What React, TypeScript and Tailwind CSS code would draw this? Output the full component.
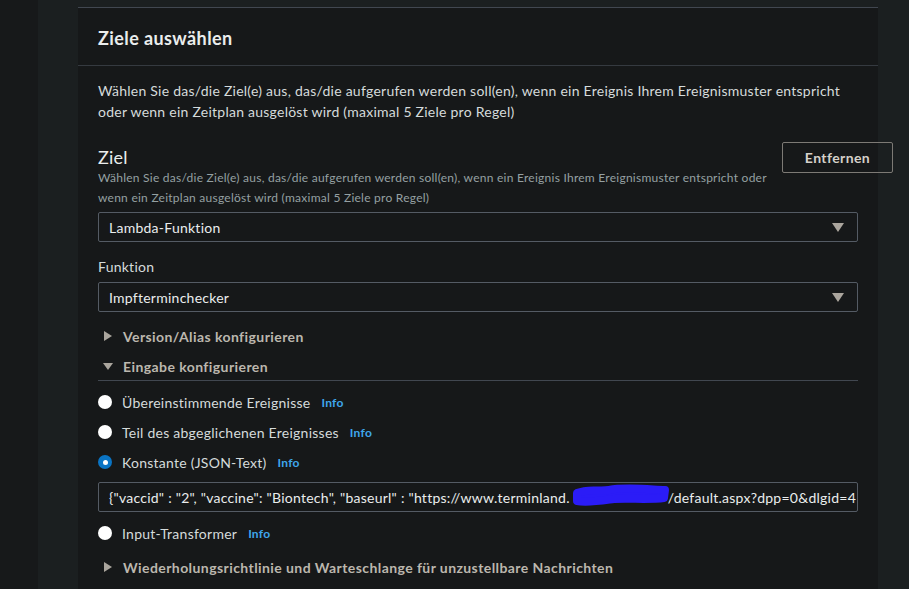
import React from "react";

const Caret = ({ open }: { open?: boolean }) => (
  <svg width="10" height="10" viewBox="0 0 10 10" className="shrink-0">
    {open ? (
      <polygon points="0,2 10,2 5,9" fill="#aaa59d" />
    ) : (
      <polygon points="1,0 9,5 1,10" fill="#aaa59d" />
    )}
  </svg>
);

const SelectBox = ({ value }: { value: string }) => (
  <div className="flex h-[30px] items-center justify-between rounded-[2px] border border-[#545b64] px-[10px] text-[14px] text-[#eaeded]">
    <span>{value}</span>
    <svg width="12" height="9" viewBox="0 0 12 9" className="mr-[3px]">
      <polygon points="0,0 12,0 6,9" fill="#aaa59d" />
    </svg>
  </div>
);

const Radio = ({ label, checked }: { label: string; checked?: boolean }) => (
  <div className="flex h-[20px] items-center">
    {checked ? (
      <span className="flex h-[14px] w-[14px] items-center justify-center rounded-full bg-[#0a74c4]">
        <span className="h-[5px] w-[5px] rounded-full bg-white" />
      </span>
    ) : (
      <span className="h-[14px] w-[14px] rounded-full bg-white" />
    )}
    <span className="ml-[10px] text-[14px] text-[#d5dbdb]">{label}</span>
    <span className="ml-[11px] mt-[2px] text-[12px] font-bold text-[#3fa7ec]">Info</span>
  </div>
);

const Expander = ({ label, open }: { label: string; open?: boolean }) => (
  <div className="flex h-[20px] items-center pl-[5px]">
    <Caret open={open} />
    <span className="ml-[10px] text-[14px] font-bold tracking-[0.42px] text-[#bcb7ae]">{label}</span>
  </div>
);

export default function App() {
  return (
    <div
      className="flex h-[589px] overflow-hidden bg-[#1b1f20] tracking-[0.25px]"
      style={{ fontFamily: 'Lato, "Noto Sans", sans-serif' }}
    >
      <div className="w-[38px] shrink-0 bg-[#17191a]" />
      <div className="w-[40px] shrink-0" />
      <div className="w-[800px] shrink-0 pt-[7px]">
        <div className="h-full border-t border-[#414750] bg-[#161819]">
          {/* Header */}
          <div className="flex h-[58px] items-center border-b border-[#353a40] px-5 pt-[3px]">
            <h2 className="text-[18px] font-bold tracking-[0.4px] text-[#eaeded]">Ziele auswählen</h2>
          </div>

          <div className="px-5 pt-[14px]">
            <p className="text-[14px] leading-[21px] text-[#d5dbdb]">
              Wählen Sie das/die Ziel(e) aus, das/die aufgerufen werden soll(en), wenn ein Ereignis Ihrem
              Ereignismuster entspricht oder wenn ein Zeitplan ausgelöst wird (maximal 5 Ziele pro Regel)
            </p>

            {/* Ziel */}
            <div className="mt-[20px] flex items-start justify-between">
              <div className="pt-[4px]">
                <div className="text-[18px] leading-[22px] text-[#eaeded]">Ziel</div>
                <div className="w-[680px] text-[12px] leading-[20px] text-[#95a0a2]">
                  Wählen Sie das/die Ziel(e) aus, das/die aufgerufen werden soll(en), wenn ein Ereignis Ihrem
                  Ereignismuster entspricht oder wenn ein Zeitplan ausgelöst wird (maximal 5 Ziele pro Regel)
                </div>
              </div>
              <button className="mr-[-35px] h-[31px] w-[111px] shrink-0 rounded-[2px] border border-[#7d7a75] text-[14px] font-bold tracking-[0.4px] text-[#d5d1ca]">
                Entfernen
              </button>
            </div>

            <div className="mt-[4px]">
              <SelectBox value="Lambda-Funktion" />
            </div>

            <div className="mt-[15px] text-[14px] leading-[20px] text-[#d5dbdb]">Funktion</div>
            <div className="mt-[5px]">
              <SelectBox value="Impfterminchecker" />
            </div>

            <div className="mt-[14px]">
              <Expander label="Version/Alias konfigurieren" />
            </div>
            <div className="mt-[10px] border-b border-[#414750] pb-[4px]">
              <Expander label="Eingabe konfigurieren" open />
            </div>

            <div className="mt-[11px] flex flex-col gap-[10px]">
              <Radio label="Übereinstimmende Ereignisse" />
              <Radio label="Teil des abgeglichenen Ereignisses" />
              <Radio label="Konstante (JSON-Text)" checked />
            </div>

            <div className="relative mt-[10px] flex h-[30px] items-center overflow-hidden whitespace-nowrap rounded-[2px] border border-[#545b64] px-[10px] text-[14px] text-[#eaeded]">
              <span>
                {'{"vaccid" : "2", "vaccine": "Biontech", "baseurl" : "https://www.terminland.'}
              </span>
              <span className="inline-block h-[16px] w-[98px] shrink-0" />
              <span>{'/default.aspx?dpp=0&dlgid=4'}</span>
              <svg
                className="absolute left-[470px] top-[1px]"
                width="104"
                height="26"
                viewBox="0 0 104 26"
              >
                <path
                  d="M8 9 C 20 4, 30 8, 40 6 C 55 3, 75 5, 96 6 L 95 14 C 80 16, 60 14, 45 15 C 30 17, 18 19, 8 17 Z"
                  fill="#2b1cf7"
                  stroke="#2b1cf7"
                  strokeWidth="8"
                  strokeLinejoin="round"
                />
              </svg>
            </div>

            <div className="mt-[11px]">
              <Radio label="Input-Transformer" />
            </div>

            <div className="mt-[14px]">
              <Expander label="Wiederholungsrichtlinie und Warteschlange für unzustellbare Nachrichten" />
            </div>
          </div>
        </div>
      </div>
      <div className="flex-1" />
    </div>
  );
}
